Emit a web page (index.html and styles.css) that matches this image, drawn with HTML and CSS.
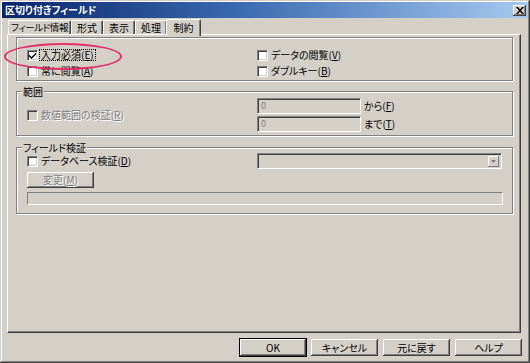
FILE: index.html
```html
<!DOCTYPE html>
<html lang="ja">
<head>
<meta charset="utf-8">
<title>区切り付きフィールド</title>
<link rel="stylesheet" href="styles.css">
</head>
<body>
<div class="window">
  <div class="titlebar">
    <span class="title">区切り付きフィールド</span>
    <span class="close">
      <svg width="8" height="7" viewBox="0 0 8 7"><path d="M0 0h2l2 2.5L6 0h2L5 3.5 8 7H6L4 4.5 2 7H0l3-3.5z" fill="#000"/></svg>
    </span>
  </div>
  <div class="tabs">
    <div class="tab t1">フィールド情報</div>
    <div class="tab t2">形式</div>
    <div class="tab t2">表示</div>
    <div class="tab t2">処理</div>
    <div class="tab sel">制約</div>
  </div>
  <div class="panel">
    <div class="group g1">
      <div class="row">
        <div class="lcell"><span class="cb checked"><svg width="7" height="7" viewBox="0 0 7 7"><path d="M0 2.5l2.5 2.5L7 0.5v2L2.5 7 0 4.5z" fill="#000"/></svg></span><span class="lbl focus">入力必須(<u>E</u>)</span></div>
        <div class="rcell"><span class="cb"></span><span class="lbl">データの閲覧(<u>V</u>)</span></div>
      </div>
      <div class="row">
        <div class="lcell"><span class="cb"></span><span class="lbl">常に閲覧(<u>A</u>)</span></div>
        <div class="rcell"><span class="cb"></span><span class="lbl">ダブルキー(<u>B</u>)</span></div>
      </div>
    </div>

    <div class="group g2">
      <span class="legend">範囲</span>
      <div class="row tall">
        <div class="lcell"><span class="cb dis"></span><span class="lbl disabled">数値範囲の検証(<u>R</u>)</span></div>
        <div class="rcell stack">
          <div class="field"><span class="input">0</span><span class="lbl">から(<u>F</u>)</span></div>
          <div class="field"><span class="input">0</span><span class="lbl">まで(<u>T</u>)</span></div>
        </div>
      </div>
    </div>

    <div class="group g3">
      <span class="legend">フィールド検証</span>
      <div class="row r3">
        <div class="lcell"><span class="cb"></span><span class="lbl">データベース検証(<u>D</u>)</span></div>
        <div class="rcell"><span class="combo"><span class="arrow"><svg width="5" height="3" viewBox="0 0 5 3"><path d="M0 0h5L2.5 3z" fill="#808080"/></svg></span></span></div>
      </div>
      <div class="btn small disabled">変更(<u>M</u>)</div>
      <div class="bar"></div>
    </div>
  </div>
  <div class="buttons">
    <div class="btn def">OK</div>
    <div class="btn">キャンセル</div>
    <div class="btn">元に戻す</div>
    <div class="btn">ヘルプ</div>
  </div>
  <div class="mark"></div>
</div>
</body>
</html>
```

FILE: styles.css
```css
* { box-sizing: border-box; }
html, body { margin: 0; padding: 0; background: #d4d0c8; }
body {
  font-family: "Noto Sans CJK JP", "Noto Sans", sans-serif;
  font-size: 10px;
  font-feature-settings: "palt";
  color: #000;
  line-height: 1;
}
.window {
  position: relative;
  width: 530px;
  height: 363px;
  padding: 2px;
  background: #d4d0c8;
  box-shadow: inset -1px -1px 0 #404040, inset 1px 1px 0 #d4d0c8, inset -2px -2px 0 #808080, inset 2px 2px 0 #fff;
}
.titlebar {
  height: 16px;
  display: flex;
  align-items: center;
  padding: 0 2px 0 3px;
  background: linear-gradient(to right, #0a246a 0%, #3a6ab0 45%, #a6caf0 100%);
}
.title { color: #fff; font-weight: bold; font-size: 10px; white-space: nowrap; }
.close {
  margin-left: auto;
  width: 13px;
  height: 11px;
  background: #d4d0c8;
  display: flex;
  align-items: center;
  justify-content: center;
  box-shadow: inset -1px -1px 0 #404040, inset 1px 1px 0 #fff, inset -2px -2px 0 #808080;
}
.tabs {
  display: flex;
  align-items: flex-end;
  height: 17px;
  padding-left: 6px;
  position: relative;
  z-index: 2;
}
.tab {
  height: 14px;
  display: flex;
  align-items: center;
  justify-content: center;
  white-space: nowrap;
  border-top: 1px solid #fff;
  border-left: 1px solid #fff;
  border-right: 1px solid #404040;
  box-shadow: inset -1px 0 0 #808080;
  border-radius: 2px 2px 0 0;
  margin-bottom: 1px;
  flex: none;
  padding-top: 1px;
}
.t1 { width: 63px; font-size: 9.5px; letter-spacing: -0.4px; }
.t2 { width: 32px; }
.tab.sel {
  width: 35px;
  height: 17px;
  margin: 0 -2px 0 -1px;
  background: #d4d0c8;
  padding-bottom: 2px;
  margin-bottom: -1px;
}
.panel {
  margin-left: 5px;
  width: 514px;
  height: 299px;
  margin-top: -1px;
  border-top: 1px solid #fff;
  border-left: 1px solid #fff;
  border-right: 1px solid #404040;
  border-bottom: 1px solid #404040;
  box-shadow: inset -1px -1px 0 #808080;
  padding: 2px 0 0 8px;
}
.group {
  position: relative;
  width: 497px;
  border: 1px solid #808080;
  box-shadow: 1px 1px 0 #fff, inset 1px 1px 0 #fff;
  padding-left: 10px;
}
.g1 { height: 44px; padding-top: 9px; }
.g2 { height: 45px; margin-top: 10px; padding-top: 6px; }
.g3 { height: 67px; margin-top: 11px; padding-top: 5px; }
.legend {
  position: absolute;
  top: -6px;
  left: 5px;
  padding: 0 1px;
  background: #d4d0c8;
  line-height: 11px;
  white-space: nowrap;
}
.row { display: flex; height: 16px; align-items: center; }
.row.tall { height: 34px; }
.lcell { width: 230px; display: flex; align-items: center; flex: none; }
.rcell { display: flex; align-items: center; }
.stack { flex-direction: column; align-items: flex-start; gap: 2px; }
.cb {
  width: 11px;
  height: 11px;
  flex: none;
  background: #fff;
  display: flex;
  align-items: center;
  justify-content: center;
  border-top: 1px solid #808080;
  border-left: 1px solid #808080;
  border-right: 1px solid #fff;
  border-bottom: 1px solid #fff;
  box-shadow: inset 1px 1px 0 #404040, inset -1px -1px 0 #d4d0c8;
}
.cb.dis { background: #d4d0c8; }
.lbl { margin-left: 3px; white-space: nowrap; }
.lbl.focus { outline: 1px dotted #000; outline-offset: 0; padding: 0 1px; margin-left: 2px; }
.disabled, .lbl.disabled { color: #808080; text-shadow: 1px 1px 0 #fff; }
.field { display: flex; align-items: center; height: 16px; }
.input {
  width: 104px;
  height: 16px;
  padding: 2px 0 0 3px;
  color: #808080;
  font-size: 9px;
  border-top: 1px solid #808080;
  border-left: 1px solid #808080;
  border-right: 1px solid #fff;
  border-bottom: 1px solid #fff;
  box-shadow: inset 1px 1px 0 #404040;
}
.field .lbl { margin-left: 3px; }
.r3 { height: 16px; }
.combo {
  width: 245px;
  height: 16px;
  display: flex;
  justify-content: flex-end;
  align-items: center;
  padding-right: 2px;
  border-top: 1px solid #808080;
  border-left: 1px solid #808080;
  border-right: 1px solid #fff;
  border-bottom: 1px solid #fff;
  box-shadow: inset 1px 1px 0 #404040;
}
.arrow {
  width: 11px;
  height: 11px;
  display: flex;
  align-items: center;
  justify-content: center;
  box-shadow: inset -1px -1px 0 #808080, inset 1px 1px 0 #fff;
}
.btn {
  width: 67px;
  height: 17px;
  display: flex;
  align-items: center;
  justify-content: center;
  white-space: nowrap;
  background: #d4d0c8;
  box-shadow: inset -1px -1px 0 #404040, inset 1px 1px 0 #fff, inset -2px -2px 0 #808080;
}
.btn.small { margin-top: 3px; height: 16px; }
.btn.def { box-shadow: 0 0 0 1px #000, inset -1px -1px 0 #404040, inset 1px 1px 0 #fff, inset -2px -2px 0 #808080; width: 66px; }
.bar {
  margin-top: 4px;
  width: 476px;
  height: 13px;
  border-top: 1px solid #808080;
  border-left: 1px solid #808080;
  border-right: 1px solid #fff;
  border-bottom: 1px solid #fff;
}
.buttons {
  display: flex;
  justify-content: flex-end;
  gap: 5px;
  margin-top: 6px;
  padding-right: 6px;
}
.mark {
  position: absolute;
  left: 4px;
  top: 43px;
  width: 118px;
  height: 27px;
  border: 2px solid #e2306a;
  border-radius: 50%;
}
```
